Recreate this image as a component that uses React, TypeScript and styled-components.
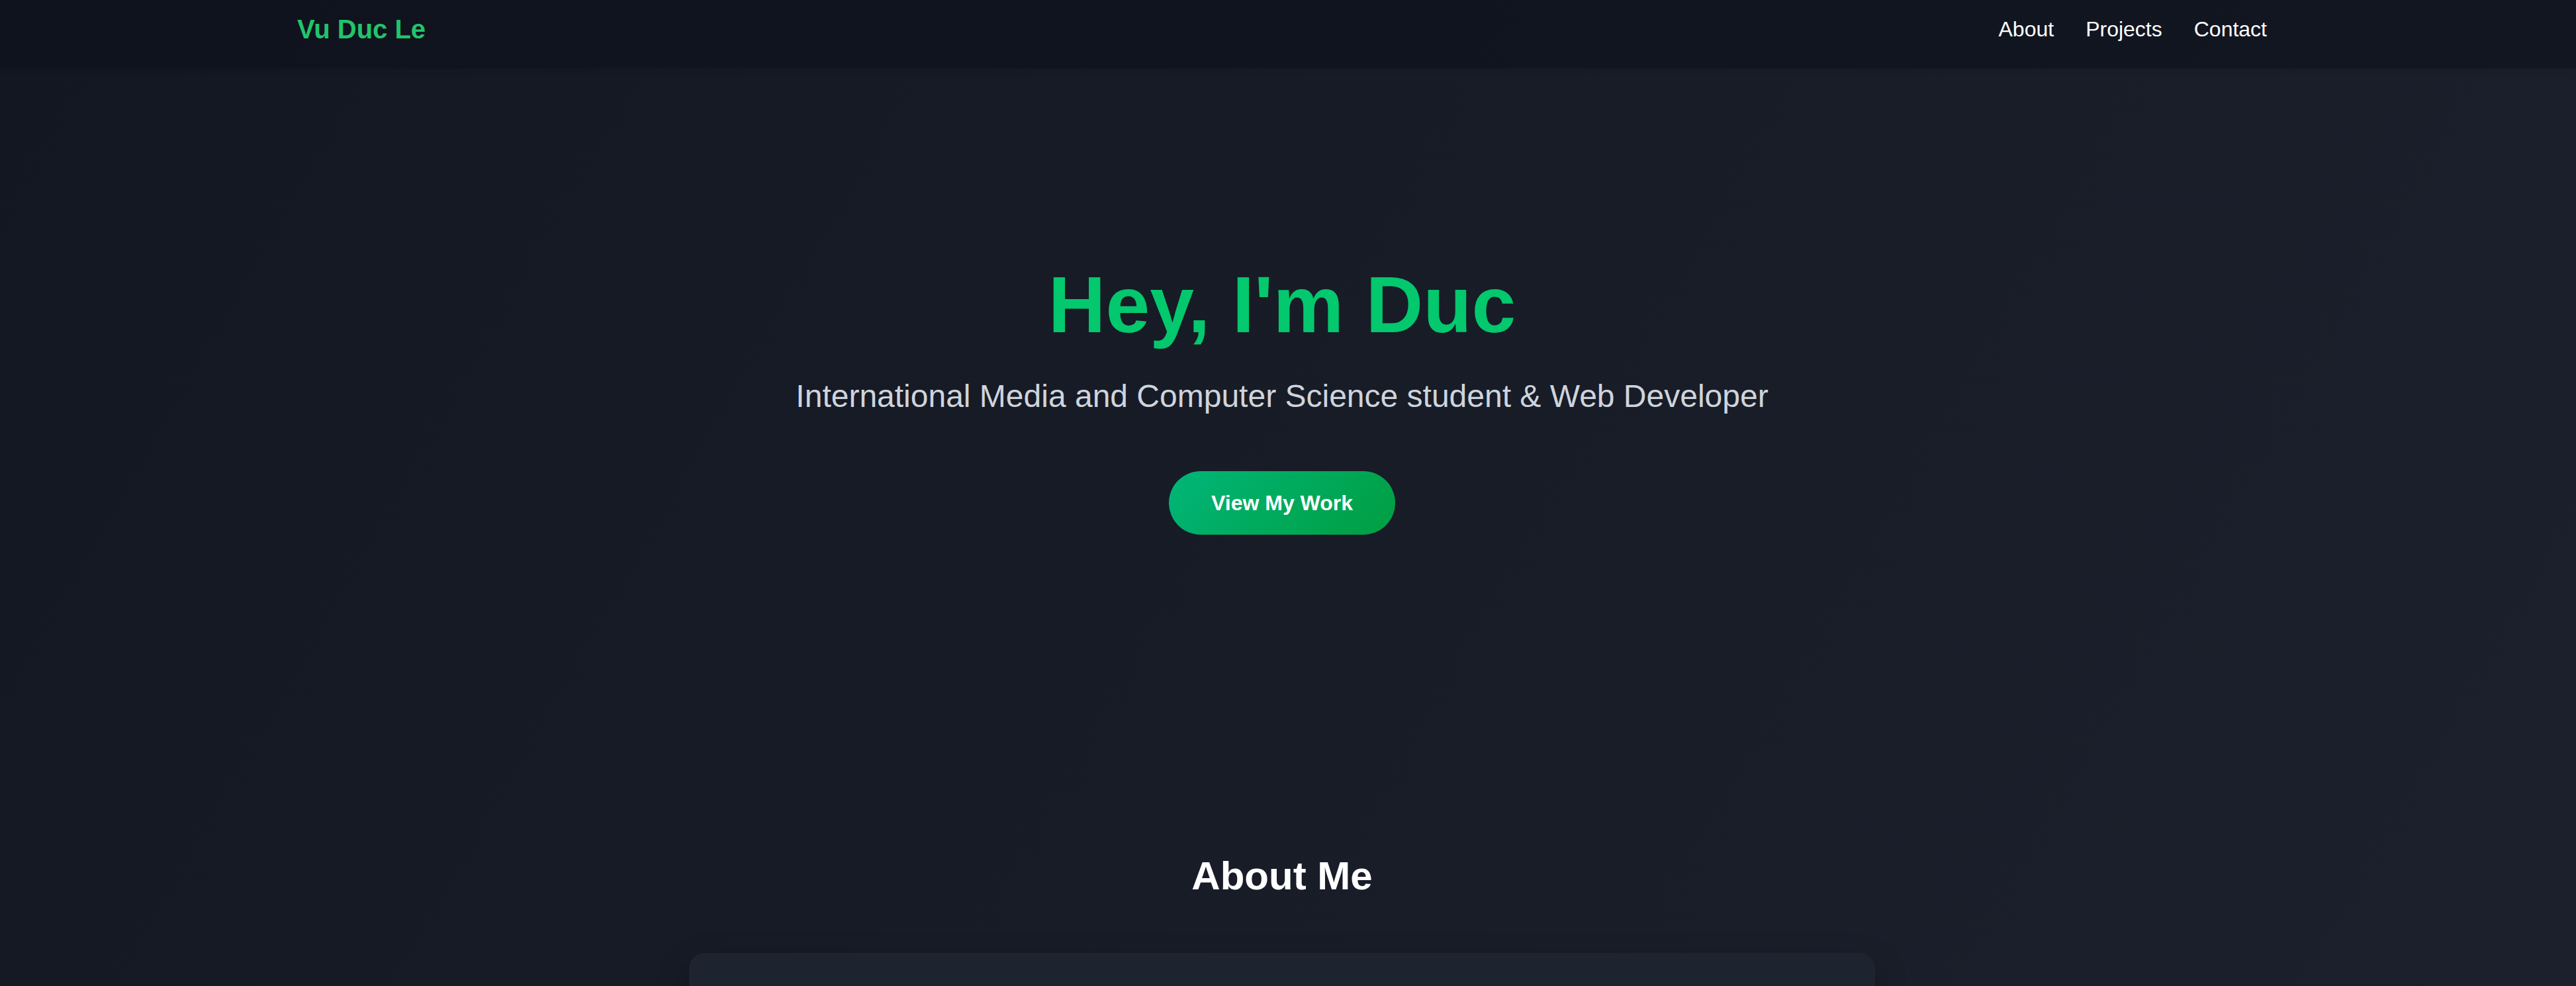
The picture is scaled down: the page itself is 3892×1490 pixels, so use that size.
import React from "react";
import styled, { createGlobalStyle } from "styled-components";

const GlobalStyle = createGlobalStyle`
  html, body {
    margin: 0;
    padding: 0;
  }
  body {
    background: linear-gradient(120deg, #131722 0%, #171c27 50%, #1b202c 100%);
    background-attachment: fixed;
    min-height: 100vh;
    color: #f3f4f6;
    font-family: "Liberation Sans", Arial, sans-serif;
    overflow-x: hidden;
  }
  * { box-sizing: border-box; }
`;

const Page = styled.div`
  min-height: 100vh;
`;

const NavBar = styled.header`
  width: 100%;
  padding: 16px 18px 31px 0;
  background: rgba(14, 17, 27, 0.6);
  box-shadow: 0 2px 8px rgba(0, 0, 0, 0.12);
`;

const Container = styled.div`
  max-width: 3072px;
  height: 56px;
  margin: 0 auto;
  padding: 0 48px;
  display: flex;
  align-items: center;
  justify-content: space-between;
`;

const Logo = styled.a`
  font-size: 40px;
  line-height: 56px;
  font-weight: 700;
  color: #22c46b;
  text-decoration: none;
`;

const NavLinks = styled.nav`
  display: flex;
  gap: 48px;
`;

const NavLink = styled.a`
  font-size: 32px;
  line-height: 48px;
  color: #ffffff;
  text-decoration: none;
`;

const Main = styled.main`
  padding-right: 18px;
`;

const Hero = styled.section`
  display: flex;
  flex-direction: column;
  align-items: center;
  text-align: center;
  padding: 297px 0 320px;
`;

const Title = styled.h1`
  margin: 0 0 47px;
  font-size: 120px;
  line-height: 120px;
  font-weight: 700;
  color: #03c86d;
`;

const Subtitle = styled.p`
  margin: 0 0 81px;
  font-size: 48px;
  line-height: 64px;
  color: #cfd4dc;
`;

const CtaButton = styled.a`
  display: inline-block;
  padding: 24px 64px;
  font-size: 32px;
  line-height: 48px;
  font-weight: 700;
  color: #ffffff;
  text-decoration: none;
  border-radius: 9999px;
  background: linear-gradient(135deg, #00b679 0%, #009e40 100%);
`;

const Section = styled.section`
  display: flex;
  flex-direction: column;
  align-items: center;
  padding: 160px 48px;
`;

const SectionTitle = styled.h2`
  margin: 0 0 80px;
  font-size: 60px;
  line-height: 72px;
  font-weight: 700;
  color: #ffffff;
`;

const Card = styled.div`
  width: 1792px;
  max-width: 100%;
  padding: 96px 64px 64px;
  border-radius: 24px;
  background: #1e2330;
  box-shadow: 0 20px 50px rgba(0, 0, 0, 0.25);
`;

const CardText = styled.p`
  margin: 0;
  font-size: 36px;
  line-height: 58px;
  color: #d1d5db;
`;

export default function App() {
  return (
    <>
      <GlobalStyle />
      <Page>
        <NavBar>
          <Container>
            <Logo href="#">Vu Duc Le</Logo>
            <NavLinks>
              <NavLink href="#about">About</NavLink>
              <NavLink href="#projects">Projects</NavLink>
              <NavLink href="#contact">Contact</NavLink>
            </NavLinks>
          </Container>
        </NavBar>
        <Main>
          <Hero>
            <Title>Hey, I'm Duc</Title>
            <Subtitle>
              International Media and Computer Science student &amp; Web Developer
            </Subtitle>
            <CtaButton href="#projects">View My Work</CtaButton>
          </Hero>
          <Section id="about">
            <SectionTitle>About Me</SectionTitle>
            <Card>
              <CardText>
                I'm a student of International Media and Computer Science who enjoys
                building clean, fast and accessible web experiences.
              </CardText>
            </Card>
          </Section>
        </Main>
      </Page>
    </>
  );
}
